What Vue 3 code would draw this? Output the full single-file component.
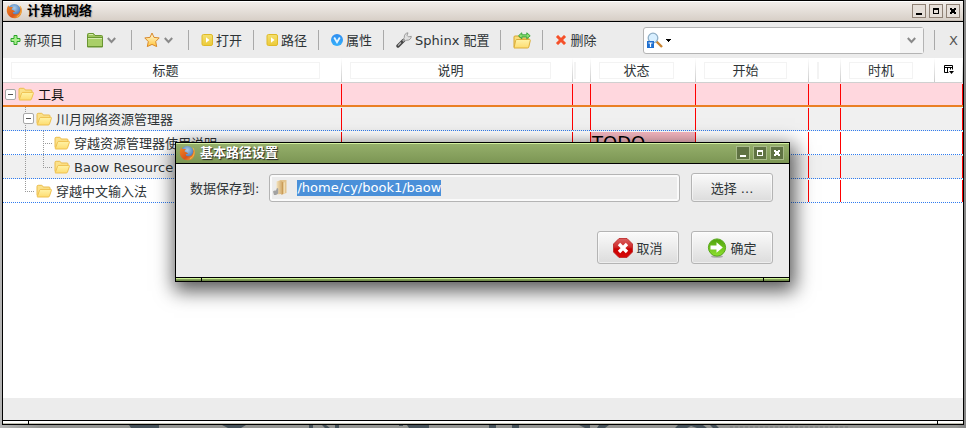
<script setup>
import { onMounted, ref } from 'vue'

const columns = [
  { key: 'title', label: '标题' },
  { key: 'desc', label: '说明' },
  { key: 'flag', label: '' },
  { key: 'state', label: '状态' },
  { key: 'start', label: '开始' },
  { key: 'mark', label: '' },
  { key: 'timing', label: '时机' }
]

const rows = [
  { name: '工具', guides: [], twist: 'root', open: true, state: '' },
  { name: '川月网络资源管理器', guides: ['blank'], twist: 'through', open: true, state: '' },
  { name: '穿越资源管理器使用说明', guides: ['blank', 'line'], twist: 'tee', state: 'TODO' },
  { name: 'Baow Resource', guides: ['blank', 'line'], twist: 'elbow', state: '' },
  { name: '穿越中文输入法', guides: ['blank'], twist: 'elbow', state: '' }
]

const path = ref('/home/cy/book1/baow')
const query = ref('')
const pathInput = ref(null)

onMounted(() => {
  pathInput.value.focus()
  pathInput.value.setSelectionRange(0, path.value.length)
})
</script>

<template>
  <svg class="defs" width="0" height="0" aria-hidden="true">
    <defs>
      <linearGradient id="gFolder" x1="0" y1="0" x2="0" y2="1">
        <stop offset="0" stop-color="#fff3a8" /><stop offset="1" stop-color="#fddc70" />
      </linearGradient>
      <linearGradient id="gStar" x1="0" y1="0" x2="0" y2="1">
        <stop offset="0" stop-color="#fffbe0" /><stop offset="1" stop-color="#ffc53a" />
      </linearGradient>
      <linearGradient id="gPlay" x1="0" y1="0" x2="0" y2="1">
        <stop offset="0" stop-color="#f4e070" /><stop offset="1" stop-color="#ecca38" />
      </linearGradient>
      <linearGradient id="gBlue" x1="0" y1="0" x2="0" y2="1">
        <stop offset="0" stop-color="#2f8df0" /><stop offset="1" stop-color="#35b0fb" />
      </linearGradient>
      <linearGradient id="gGreen" x1="0" y1="0" x2="0" y2="1">
        <stop offset="0" stop-color="#4fa30c" /><stop offset="1" stop-color="#8ee02e" />
      </linearGradient>
      <linearGradient id="gRed" x1="0" y1="0" x2="0" y2="1">
        <stop offset="0" stop-color="#d96060" /><stop offset=".45" stop-color="#cf2a2a" />
        <stop offset=".55" stop-color="#c80000" /><stop offset="1" stop-color="#d80808" />
      </linearGradient>
      <radialGradient id="gGlobe" cx=".5" cy=".3" r=".7">
        <stop offset="0" stop-color="#a9cdeb" /><stop offset="1" stop-color="#2a5ea6" />
      </radialGradient>
      <linearGradient id="gFox" x1="0" y1="0" x2="1" y2="1">
        <stop offset="0" stop-color="#f08a24" /><stop offset=".6" stop-color="#d9541c" /><stop offset="1" stop-color="#f3b63c" />
      </linearGradient>
      <linearGradient id="gPanel" x1="0" y1="0" x2="1" y2="0">
        <stop offset="0" stop-color="#f3e2bd" /><stop offset="1" stop-color="#d9b67c" />
      </linearGradient>
      <symbol id="fox" viewBox="0 0 16 16">
        <circle cx="8.3" cy="7.7" r="6.6" fill="url(#gGlobe)" />
        <path d="M2.4 2.2C.6 4.5.2 8 1.6 11c1.700 3.300 5.400 4.900 8.700 4.100 3.400-.8 5.500-3.800 5.500-7.400 0-2-.7-3.700-1.700-4.700.5 1.600.4 3.200-.1 4.700-.8 2.600-2.900 4-5.200 3.500-1.500-.3-2.200-1.200-1.900-2 .6-.5 1.500-.2 2.300-.8L7.300 7.300C6.500 7 5.600 6.800 5.500 6c.4-.8 1-1.200 1.500-1.700C5.800 4.100 4.600 4 3.700 4.300 3 3.700 2.500 3 2.400 2.200z" fill="url(#gFox)" />
        <path d="M13.800 2.800c1 1.300 1.600 3.100 1.300 5.200-.3 2.600-1.900 4.800-4.300 5.700" fill="none" stroke="#f5c04a" stroke-width=".9" />
      </symbol>
      <symbol id="folder" viewBox="0 0 16 14">
        <path d="M1 11.500V2.500Q1 1.300 2.200 1.300H5.500Q6.300 1.300 6.800 2.300L7.200 3H13Q14 3 14 4V6" fill="#fbe18a" stroke="#ecbd4c" />
        <path d="M1.200 12.800 3.600 6.200Q3.900 5.400 4.800 5.400H14.700Q15.700 5.400 15.400 6.300L13.500 12Q13.200 13 12.200 13H1.500Z" fill="url(#gFolder)" stroke="#efc04e" />
      </symbol>
    </defs>
  </svg>

  <div class="desktop">
    <main class="window">
      <header class="titlebar">
        <svg class="fox" viewBox="0 0 16 16"><use href="#fox" /></svg>
        <h1>计算机网络</h1>
        <div class="controls">
          <button aria-label="Minimize"><svg viewBox="0 0 12 12"><path d="M3 8h6v2H3z" /></svg></button>
          <button aria-label="Maximize"><svg viewBox="0 0 12 12"><path fill-rule="evenodd" d="M3 3h6v6H3zM4 5v3h4V5z" /></svg></button>
          <button aria-label="Close"><svg viewBox="0 0 12 12"><path d="M3 3h2v1h2V3h2v2H8v2h1v2H7V8H5v1H3V7h1V5H3z" /></svg></button>
        </div>
      </header>

      <nav class="toolbar">
        <button class="tool first">
          <svg width="11" height="12" viewBox="0 0 11 12"><path d="M4 1.500h3v3h3v3H7v3H4v-3H1v-3h3z" fill="#a9ef8c" stroke="#2ba52a" /></svg>
          <span class="txt">新项目</span>
        </button>
        <button class="tool menu" aria-label="Folder">
          <svg width="16" height="15" viewBox="0 0 16 15"><path d="M.5 14V1.500Q.5.5 1.500.5h5l1.500 2h6.500q1 0 1 1V14z" fill="#9dc45c" stroke="#6a9632" /><path d="M1 5.500h14V14H1z" fill="#a9cf68" /><path d="M1 4.500h14M1 13.500h14" stroke="#6a9632" fill="none" /><path d="M1 5.500h14M2 1.500h4" stroke="#d5ebad" fill="none" /></svg>
          <svg class="chev" width="9" height="7" viewBox="0 0 9 7"><path d="M.8 1 4.500 5 8.200 1" /></svg>
        </button>
        <button class="tool menu" aria-label="Favourites">
          <svg width="16" height="16" viewBox="0 0 16 16"><path d="M8 1l2 4.400 5.200.5-3.500 3.700 1 5L8 12.400 3.300 14.600l1-5L.8 5.900 6 5.400z" fill="url(#gStar)" stroke="#d98a2c" stroke-linejoin="round" /></svg>
          <svg class="chev" width="9" height="7" viewBox="0 0 9 7"><path d="M.8 1 4.500 5 8.200 1" /></svg>
        </button>
        <button v-for="label in ['打开', '路径']" :key="label" class="tool">
          <svg width="12" height="12" viewBox="0 0 12 12"><rect x="1" y=".5" width="10.500" height="11" rx="1.500" fill="url(#gPlay)" stroke="#dfba28" /><path d="M5 3.200 8.500 6 5 8.800z" fill="#fff" /></svg>
          <span class="txt">{{ label }}</span>
        </button>
        <button class="tool">
          <svg width="12" height="12" viewBox="0 0 12 12"><circle cx="6" cy="6" r="6" fill="url(#gBlue)" /><path d="M3.200 3.500 6 8.300 8.800 3.500" fill="none" stroke="#e4f4ff" stroke-width="1.800" /></svg>
          <span class="txt">属性</span>
        </button>
        <button class="tool">
          <svg width="16" height="16" viewBox="0 0 16 16"><path d="M2 14 7.500 8.500" stroke="#444" stroke-width="3.400" stroke-linecap="round" /><path d="M2 13.600 5 10.500" stroke="#bbb" stroke-width="1.200" /><path d="M6.800 9.200 10.500 5.700" stroke="#aaa" stroke-width="2" /><path d="M8.300 5.500C8 3 9.500 1 12 .8L11 3.300l1.500 1.600 2.800-.6c0 2.300-1.800 4.200-4.500 3.900L9.500 8.700 7.600 6.900z" fill="#e0e0e0" stroke="#8a8a8a" stroke-width=".8" /></svg>
          <span class="txt">Sphinx 配置</span>
        </button>
        <button class="tool" aria-label="Sync folder">
          <svg width="18" height="17" viewBox="0 0 18 17"><path d="M1 15V5q0-1 1-1h3.500l1.500 2h8q1 0 1 1v2" fill="#f8dc7a" stroke="#d6a62e" /><path d="M1 16 2.600 8.500q.2-1 1.200-1H16.500q1 0 .8 1L15.800 15q-.2 1-1.200 1z" fill="url(#gFolder)" stroke="#dcae3a" /><path d="M5.500 3.800 8.800.8V2.800h5V.8l3.400 3-3.400 3V4.900h-5v1.900z" fill="#8be070" stroke="#2f9e35" stroke-width=".9" /></svg>
        </button>
        <button class="tool last">
          <svg width="12" height="12" viewBox="0 0 12 12"><path d="M1 3 3 1 6 4 9 1l2 2-3 3 3 3-2 2-3-3-3 3-2-2 3-3z" fill="#f4502c" stroke="#f98a68" stroke-width=".6" /></svg>
          <span class="txt">删除</span>
        </button>
        <div class="search">
          <svg width="16" height="17" viewBox="0 0 16 17"><path d="M9.500 9.500 15 15" stroke="#c98432" stroke-width="2.400" /><circle cx="6" cy="6" r="4.800" fill="#d8efff" stroke="#8faec6" stroke-width="1.300" /><path d="M0 9h7v7H0z" fill="#1f6fd0" /><path d="M1.500 11h4M3.500 11v4" stroke="#fff" stroke-width="1.200" /></svg>
          <svg width="5" height="3" viewBox="0 0 5 3"><path d="M0 0h5v1H4v1H3v1H2V2H1V1H0z" /></svg>
          <input v-model="query" type="text" aria-label="Search" />
          <button class="drop" aria-label="History"><svg class="chev" width="9" height="7" viewBox="0 0 9 7"><path d="M.8 1 4.500 5 8.200 1" /></svg></button>
        </div>
        <button class="close"><span class="txt">X</span></button>
      </nav>

      <section class="content">
        <table>
          <colgroup>
            <col v-for="c in columns" :key="c.key" :class="'c-' + c.key" />
            <col class="c-pick" />
          </colgroup>
          <thead>
            <tr>
              <th v-for="c in columns" :key="c.key"><span :class="['cap', { slim: !c.label }]">{{ c.label }}</span></th>
              <th class="pick">
                <button aria-label="Columns">
                  <svg width="10" height="10" viewBox="0 0 10 10"><path d="M.5 7.500V.5h8v4M.5 2.500h8M3.500 2.500v5M6.500 2.500v2M.5 7.500h4" fill="none" stroke="#000" /><path d="M5 6h5L7.500 9z" /></svg>
                </button>
              </th>
            </tr>
          </thead>
          <tbody>
            <tr v-for="row in rows" :key="row.name" :class="row.twist">
              <td>
                <div class="node">
                  <i v-for="(g, i) in row.guides" :key="i" :class="['guide', g]"></i>
                  <span :class="['twist', row.twist]"><button v-if="row.open" aria-label="Collapse"></button></span>
                  <svg class="folder" viewBox="0 0 16 14"><use href="#folder" /></svg>
                  <span class="name txt">{{ row.name }}</span>
                </div>
              </td>
              <td></td>
              <td></td>
              <td :class="{ todo: row.state }"><span class="txt">{{ row.state }}</span></td>
              <td></td>
              <td></td>
              <td colspan="2"></td>
            </tr>
          </tbody>
        </table>
      </section>
      <footer class="status"></footer>
      <div class="grip"></div>

      <form class="dialog" role="dialog" aria-labelledby="dlg" @submit.prevent>
        <header class="titlebar green">
          <svg class="fox" viewBox="0 0 16 16"><use href="#fox" /></svg>
          <h2 id="dlg">基本路径设置</h2>
          <div class="controls">
            <button type="button" aria-label="Minimize"><svg viewBox="0 0 12 12"><path d="M3 8h6v2H3z" /></svg></button>
            <button type="button" aria-label="Maximize"><svg viewBox="0 0 12 12"><path fill-rule="evenodd" d="M3 3h6v6H3zM4 5v3h4V5z" /></svg></button>
            <button type="button" aria-label="Close"><svg viewBox="0 0 12 12"><path d="M3 3h2v1h2V3h2v2H8v2h1v2H7V8H5v1H3V7h1V5H3z" /></svg></button>
          </div>
        </header>
        <div class="fields">
          <label class="txt" for="path">数据保存到:</label>
          <div class="pathbox">
            <svg width="16" height="17" viewBox="0 0 16 17"><path d="M3.500 2.500 8 1v14l-4.500.5z" fill="url(#gPanel)" /><path d="M8 1h5.500v13L8 15.500z" fill="#e3c48e" /><path d="M8.500 2 10.500 4v11l-2 .8z" fill="#c99b58" /><path d="M10.500 4 12 3v11l-1.500 1z" fill="#f2ddb2" /><path d="M0 12.500q1-1.500 3-1l1-2.500 1.200.5v5L3 16H1z" fill="#a2a2a2" /></svg>
            <input id="path" ref="pathInput" v-model="path" type="text" />
          </div>
          <button type="button" class="btn"><span class="txt">选择 ...</span></button>
        </div>
        <div class="actions">
          <button type="button" class="btn tall">
            <svg width="20" height="20" viewBox="0 0 20 20"><path d="M6 .5h8L19.500 6v8L14 19.500H6L.5 14V6z" fill="url(#gRed)" stroke="#bb2020" stroke-width=".8" /><path d="M6 6l8 8M14 6l-8 8" stroke="#fff" stroke-width="3.400" /></svg>
            <span class="txt">取消</span>
          </button>
          <button type="submit" class="btn tall">
            <svg width="20" height="20" viewBox="0 0 20 20"><ellipse cx="10" cy="18.500" rx="6" ry="1.300" fill="#aaa" /><circle cx="10" cy="9.500" r="8.600" fill="url(#gGreen)" stroke="#58a81c" /><path d="M3.500 7.500h6V4.300l6.300 5.200-6.300 5.200v-3.200h-6z" fill="#fff" /></svg>
            <span class="txt">确定</span>
          </button>
        </div>
        <div class="grip green"></div>
      </form>
    </main>
    <svg class="wallpaper" height="3" aria-hidden="true">
      <path d="M127 0h30v3h-28zM220 0h24l-5 3h-13zM307 0h4v3h-4zM320 0h4l4 3h-5zM333 0h4v3h-4zM397 0h4v1h-4zM405 0h22v3h-20zM487 0h7v3h-7zM510 0h7v3h-7zM577 0h11v3h-5zM597 0h10l-4 3h-8zM676 0h25l4 3h-10l-6-2-4 2h-12zM708 0h6l3 3h-6z" />
      <path class="faint" d="M728 2h120" />
    </svg>
  </div>
</template>

<style>
body {
  margin: 0;
}
</style>

<style scoped>
.defs {
  position: absolute;
}
.desktop {
  display: flex;
  flex-direction: column;
  min-height: 100vh;
  box-sizing: border-box;
  padding: 0 2px;
  background: linear-gradient(90deg, #b5b5b5 0, #949592 40px, #949592 calc(100% - 10px), #858585 100%);
  font: 13px/20px "DejaVu Sans", "Noto Sans CJK SC", sans-serif;
  color: #2e3436;
}
button,
input {
  font: inherit;
  color: inherit;
  margin: 0;
  padding: 0;
  border: 0;
  background: none;
  outline: none;
}
svg {
  flex: none;
  display: block;
}
.txt {
  padding-top: 2px;
}
.window {
  position: relative;
  flex: 1;
  display: flex;
  flex-direction: column;
  border: 1px solid #000;
  background: #fff;
}
.titlebar {
  display: flex;
  align-items: center;
  height: 20px;
  padding: 0 3px;
  border-bottom: 1px solid #000;
  background: linear-gradient(#f3efec, #d8d0c8 95%, #b5aca4);
  box-shadow: inset 0 1px #fff;
}
.titlebar h1,
.titlebar h2 {
  flex: 1;
  margin: 0 0 0 5px;
  font-size: 13px;
  line-height: 20px;
  font-weight: bold;
  color: #000;
  text-shadow: 1px 1px 1px #aaa;
}
.fox {
  width: 16px;
  height: 16px;
}
.controls {
  display: flex;
  gap: 3px;
}
.controls button {
  width: 14px;
  height: 14px;
  border: 1px solid #8f8175;
  background: #e6dfd9;
}
.titlebar.green {
  padding-right: 5px;
  background: linear-gradient(#96b06c, #7c9654);
  box-shadow: inset 0 1px #d3f09f;
}
.titlebar.green h2 {
  color: #fff;
  text-shadow: 1px 1px 1px #222;
}
.titlebar.green .controls button {
  border-color: #a9bb8a;
  background: #5f7243;
  fill: #fff;
}
.toolbar {
  display: flex;
  align-items: center;
  height: 36px;
  background: #ececec;
}
.tool {
  display: flex;
  align-items: center;
  gap: 3px;
  padding: 0 11px 0 12px;
  height: 20px;
  border-right: 1px solid #a9a9a9;
  white-space: nowrap;
}
.tool.first {
  padding-left: 7px;
}
.tool.menu {
  gap: 4px;
  padding-right: 15px;
}
.tool.last {
  border: 0;
}
.chev {
  fill: none;
  stroke: #8a8a8a;
  stroke-width: 2;
}
.search {
  display: flex;
  align-items: center;
  gap: 3px;
  width: 276px;
  height: 25px;
  margin-left: auto;
  padding-left: 3px;
  border: 1px solid #b4b4b4;
  border-radius: 3px;
  background: #fff;
}
.search input {
  flex: 1;
  min-width: 0;
}
.drop {
  display: grid;
  place-items: center;
  width: 23px;
  height: 25px;
  background: #f4f4f4;
}
.close {
  display: flex;
  align-items: center;
  height: 20px;
  margin-left: 10px;
  padding: 0 5px 0 14px;
  border-left: 1px solid #a9a9a9;
  color: #555;
}
.content {
  flex: 1;
}
table {
  width: 100%;
  table-layout: fixed;
  border-collapse: separate;
  border-spacing: 0;
}
.c-desc {
  width: 231px;
}
.c-flag {
  width: 18px;
}
.c-state {
  width: 105px;
}
.c-start {
  width: 113px;
}
.c-mark {
  width: 32px;
}
.c-timing {
  width: 94px;
}
.c-pick {
  width: 28px;
}
th {
  box-sizing: border-box;
  height: 25px;
  padding: 0 22px 0 8px;
  border-bottom: 1px solid #d0d0d0;
  background: linear-gradient(#fff, #ccc) right / 1px 100% no-repeat;
  font-weight: normal;
}
.cap {
  display: block;
  height: 15px;
  border: 1px solid #f3f3f3;
  line-height: 15px;
}
th:has(.slim) {
  padding: 0 0 0 8px;
}
th:nth-child(3) {
  padding-left: 1px;
}
.cap.slim {
  width: 0;
}
.pick {
  padding: 0 0 0 9px;
}
.pick button {
  display: block;
}
td {
  box-sizing: border-box;
  height: 24px;
  padding: 0;
  border-bottom: 1px solid transparent;
  background: linear-gradient(#f00, #f00) right 0 top 1px / 1px 22px no-repeat;
  line-height: 22px;
}
tbody tr {
  background: repeating-linear-gradient(90deg, #2f7cf0 0 1px, transparent 1px 2px) left bottom / 100% 1px no-repeat, #fff;
}
tbody tr:nth-child(even) {
  background-color: #f0f0f0;
}
tbody tr.root {
  background: #ffd7de;
  color: #111;
}
.root td {
  border-bottom: 2px solid #ea7f24;
}
td.todo {
  background: linear-gradient(#f00, #f00) right 0 top 1px / 1px 22px no-repeat, linear-gradient(#f8b8c2, #f8b8c2) 0 1px / 100% 22px no-repeat;
  padding-left: 1px;
  font-size: 18px;
  color: #000;
}
.node {
  display: flex;
  align-items: center;
  height: 22px;
  padding-left: 2px;
  white-space: nowrap;
}
.guide {
  width: 18px;
  height: 24px;
}
.twist {
  display: flex;
  align-items: center;
  width: 13px;
  height: 24px;
}
.line,
.through {
  background: repeating-linear-gradient(#999 0 1px, transparent 1px 2px) 2px 0 / 1px 100% no-repeat;
}
.twist.tee,
.twist.elbow {
  background: repeating-linear-gradient(#999 0 1px, transparent 1px 2px) 2px 0 / 1px 100% no-repeat, repeating-linear-gradient(90deg, #999 0 1px, transparent 1px 2px) 2px 12px / 9px 1px no-repeat;
}
.twist.elbow {
  background-size: 1px 12px, 9px 1px;
}
/* the first level's guide runs on past its nested rows */
tr.tee .guide.blank,
tr.elbow .guide.blank:not(:nth-last-child(4)) {
  background: none;
}
.guide.line {
  background-position: 2px 0;
}
.twist button {
  width: 11px;
  height: 11px;
  border: 1px solid #a8a8a8;
  border-radius: 2px;
  background: linear-gradient(#555, #555) center / 5px 1px no-repeat, #fff;
}
tr.through {
  background: repeating-linear-gradient(90deg, #2f7cf0 0 1px, transparent 1px 2px) left bottom / 100% 1px no-repeat, #f0f0f0;
}
.folder {
  width: 16px;
  height: 14px;
}
.name {
  margin-left: 4px;
}
.status {
  height: 22px;
  background: #ececec;
}
.grip {
  height: 3px;
  border-top: 1px solid #000;
  background: linear-gradient(#000, #000) 25px 0 / 1px 3px no-repeat, linear-gradient(#000, #000) right 25px top 0 / 1px 3px no-repeat, linear-gradient(#fff 0 2px, #c3c2b4 2px);
}
.grip.green {
  background: linear-gradient(#000, #000) 25px 0 / 1px 3px no-repeat, linear-gradient(#000, #000) right 25px top 0 / 1px 3px no-repeat, linear-gradient(#cdf294 0 1px, #86a35b 1px 2px, #708b49 2px);
}
.wallpaper {
  width: 100%;
  fill: #46525a;
}
.faint {
  stroke: #7a7d7d;
  stroke-dasharray: 3 2;
}
.dialog {
  position: absolute;
  top: 141px;
  left: 172px;
  right: 173px;
  display: flex;
  flex-direction: column;
  border: 1px solid #000;
  background: #ececec;
  box-shadow: 2px 6px 18px 3px rgba(0, 0, 0, 0.65);
}
.fields {
  display: flex;
  align-items: center;
  gap: 11px;
  padding: 9px 16px 0 14px;
}
.fields label {
  margin-right: -1px;
}
.pathbox {
  flex: 1;
  display: flex;
  align-items: center;
  gap: 8px;
  min-width: 0;
  height: 26px;
  padding-left: 3px;
  border: 1px solid #b4b4b4;
  border-radius: 3px;
  box-shadow: inset 0 0 0 2px #fafafa;
  background: #ececec;
}
.pathbox input {
  flex: 1;
  min-width: 0;
  height: 16px;
  line-height: 16px;
  caret-color: transparent;
}
.pathbox input::selection {
  background: #4a90d9;
  color: #fff;
}
.actions {
  display: flex;
  justify-content: flex-end;
  gap: 12px;
  padding: 29px 16px 13px;
}
.btn {
  display: flex;
  align-items: center;
  justify-content: center;
  gap: 3px;
  box-sizing: border-box;
  width: 82px;
  height: 29px;
  border: 1px solid #b4b4b4;
  border-radius: 3px;
  background: linear-gradient(#fafafa, #dcdcdc);
  box-shadow: inset 0 0 0 1px rgba(255, 255, 255, 0.5);
}
.btn.tall {
  height: 33px;
}
</style>
